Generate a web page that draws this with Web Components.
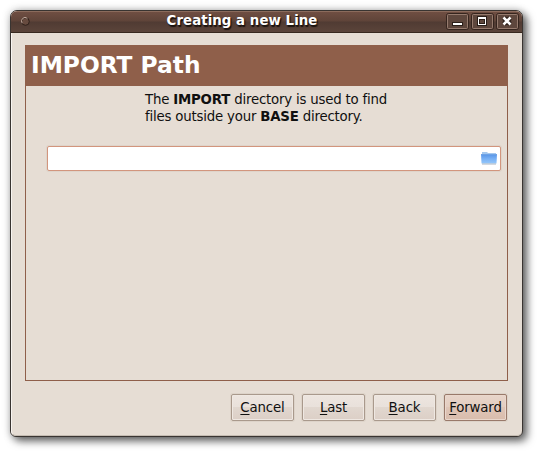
<!DOCTYPE html>
<html lang="en">
<head>
<meta charset="utf-8">
<title>Creating a new Line</title>
<style>
body{margin:0;width:540px;height:454px;overflow:hidden;background:#fff;padding:10px 0 0 10px;box-sizing:border-box;font-family:"DejaVu Sans",sans-serif;font-size:13.33px;color:#101010}
</style>
</head>
<body>
<dialog-window>
  <title-bar slot="title">Creating a new Line</title-bar>
  <wizard-page>
    <span slot="heading">IMPORT Path</span>
    <span slot="description">The <b>IMPORT</b> directory is used to find<br>files outside your <b>BASE</b> directory.</span>
    <path-entry></path-entry>
  </wizard-page>
  <action-button slot="actions" key="C">ancel</action-button>
  <action-button slot="actions" key="L">ast</action-button>
  <action-button slot="actions" key="B">ack</action-button>
  <action-button slot="actions" key="F" primary>orward</action-button>
</dialog-window>
<script>
function define(name, html) {
  customElements.define(name, class extends HTMLElement {
    constructor() {
      super();
      this.attachShadow({mode: 'open'}).innerHTML = html;
    }
    connectedCallback() {
      const key = this.shadowRoot.querySelector('u');
      if (key) key.textContent = this.getAttribute('key');
    }
  });
}

define('dialog-window', `
<style>
:host{display:flex;flex-direction:column;box-sizing:border-box;width:513px;height:427px;border:1px solid #393431;border-radius:7px 7px 6px 6px;background:#e6ddd4;box-shadow:4px 4px 9px 0 rgba(0,0,0,.6),0 0 9px rgba(0,0,0,.22)}
.body{flex:1;display:flex;flex-direction:column;padding:12px 14px 14px 13px;border-left:1px solid #f8f4f0;border-bottom:1px solid #c5bcb2;border-radius:0 0 5px 5px;box-sizing:border-box}
.actions{display:flex;justify-content:flex-end;gap:8px;margin-top:13px;padding-right:1px}
</style>
<slot name="title"></slot>
<div class="body"><slot></slot><div class="actions"><slot name="actions"></slot></div></div>`);

define('title-bar', `
<style>
:host{display:flex;align-items:center;box-sizing:border-box;height:23px;border-bottom:1px solid #38291f;border-radius:6px 6px 0 0;background:linear-gradient(#8b6b5c 0 1px,#6f4e42 1px,#5f4439 10px,#503b33 11px,#5b443a 21px);padding:0 2px 0 10px}
.menu{width:9px;height:9px;flex:none;margin-top:-1px}
.title{flex:1;text-align:center;color:#fff;font-weight:bold;font-size:13.33px;letter-spacing:.06px;line-height:18px;padding-left:8px;margin-top:-1px;text-shadow:1px 1px 1px #1d1410,1px 2px 1px #1d1410}
.buttons{display:flex;gap:1px}
svg{display:block}
</style>
<svg class="menu" viewBox="0 0 9 9"><circle cx="4.5" cy="4.5" r="3.8" fill="#674b3f" stroke="#2f211b"/><path d="M1.2 6.2A3.6 3.6 0 0 1 6.4 1.3" fill="none" stroke="#c2aa9e"/></svg>
<span class="title"><slot></slot></span>
<span class="buttons">
<svg width="24" height="18"><rect x=".5" y=".5" width="22" height="16" rx="2" fill="none" stroke="#35251e"/><rect x="1.5" y="1.5" width="20" height="14" rx="1" fill="#5e473d" stroke="#967b6e"/><rect x="6" y="9" width="11" height="4" fill="#2b1f19"/><rect x="7" y="10" width="9" height="2" fill="#fff"/></svg>
<svg width="24" height="18"><rect x=".5" y=".5" width="22" height="16" rx="2" fill="none" stroke="#35251e"/><rect x="1.5" y="1.5" width="20" height="14" rx="1" fill="#5e473d" stroke="#967b6e"/><rect x="6" y="3" width="10" height="10" fill="#2b1f19"/><rect x="7" y="4" width="8" height="8" fill="#fff"/><rect x="8" y="6" width="6" height="5" fill="#2b1f19"/><rect x="9" y="7" width="4" height="3" fill="#5e473d"/></svg>
<svg width="24" height="18"><rect x=".5" y=".5" width="22" height="16" rx="2" fill="none" stroke="#35251e"/><rect x="1.5" y="1.5" width="20" height="14" rx="1" fill="#5e473d" stroke="#967b6e"/><path d="M8 5L14 11M14 5L8 11" stroke="#2b1f19" stroke-width="5"/><path d="M7.5 4.5L14.5 11.5M14.5 4.5L7.5 11.5" stroke="#fff" stroke-width="2.5"/></svg>
</span>`);

define('wizard-page', `
<style>
:host{display:flex;flex-direction:column;box-sizing:border-box;width:483px;height:336px;border:1px solid #8f5f4a}
h1{margin:-1px 0 0 -1px;width:483px;box-sizing:border-box;height:41px;padding-left:6px;background:#8f5f4a;color:#fff;font-size:23.3px;line-height:39px;white-space:nowrap}
p{margin:5px 0 0 119px;line-height:17px;letter-spacing:-.2px;font-variant-ligatures:common-ligatures;white-space:nowrap}
</style>
<h1><slot name="heading"></slot></h1>
<p><slot name="description"></slot></p>
<slot></slot>`);

define('path-entry', `
<style>
:host{display:flex;align-items:center;justify-content:flex-end;box-sizing:border-box;width:454px;height:25px;margin:21px 0 0 21px;padding-right:3px;background:#fff;border:1px solid #d2957d;border-radius:2px;box-shadow:0 0 0 1px #dfd4ca}
svg{margin-top:-2px}
</style>
<svg width="16" height="14" viewBox="0 0 16 14"><defs><linearGradient id="g" x2="0" y2="1"><stop stop-color="#5593e6"/><stop offset=".5" stop-color="#78b0f4"/><stop offset="1" stop-color="#94c7fb"/></linearGradient></defs><path d="M1 3V1H6L7 2H15V4H1Z" fill="#a5c8ee"/><path d="M0 3H16L15.5 12.5H.5Z" fill="url(#g)"/><path d="M0 3.5H16" stroke="#6fa3e6"/><path d="M1 13H15" stroke="#a9b4c1"/></svg>`);

define('action-button', `
<style>
:host{display:flex;align-items:center;justify-content:center;box-sizing:border-box;width:63px;height:27px;border:1px solid #a9998c;border-radius:2px;background:linear-gradient(#ede5df,#e9e1db 48%,#e1d7cf 50%,#dccfc6);box-shadow:0 0 0 1px #ddd3c9,inset 0 0 0 1px #efe8e2;color:#101010;letter-spacing:-.15px;white-space:nowrap}
:host([primary]){background:linear-gradient(#e8d5ca,#e4cdc0 48%,#dfc5b7 50%,#d9bcac);border-color:#99796a;box-shadow:0 0 0 1px #ddd3c9,inset 0 0 0 1px #ead7cc}
u{text-underline-offset:2px;text-decoration-thickness:1px;text-decoration-skip-ink:none}
</style>
<span><u></u><slot></slot></span>`);
</script>
</body>
</html>
